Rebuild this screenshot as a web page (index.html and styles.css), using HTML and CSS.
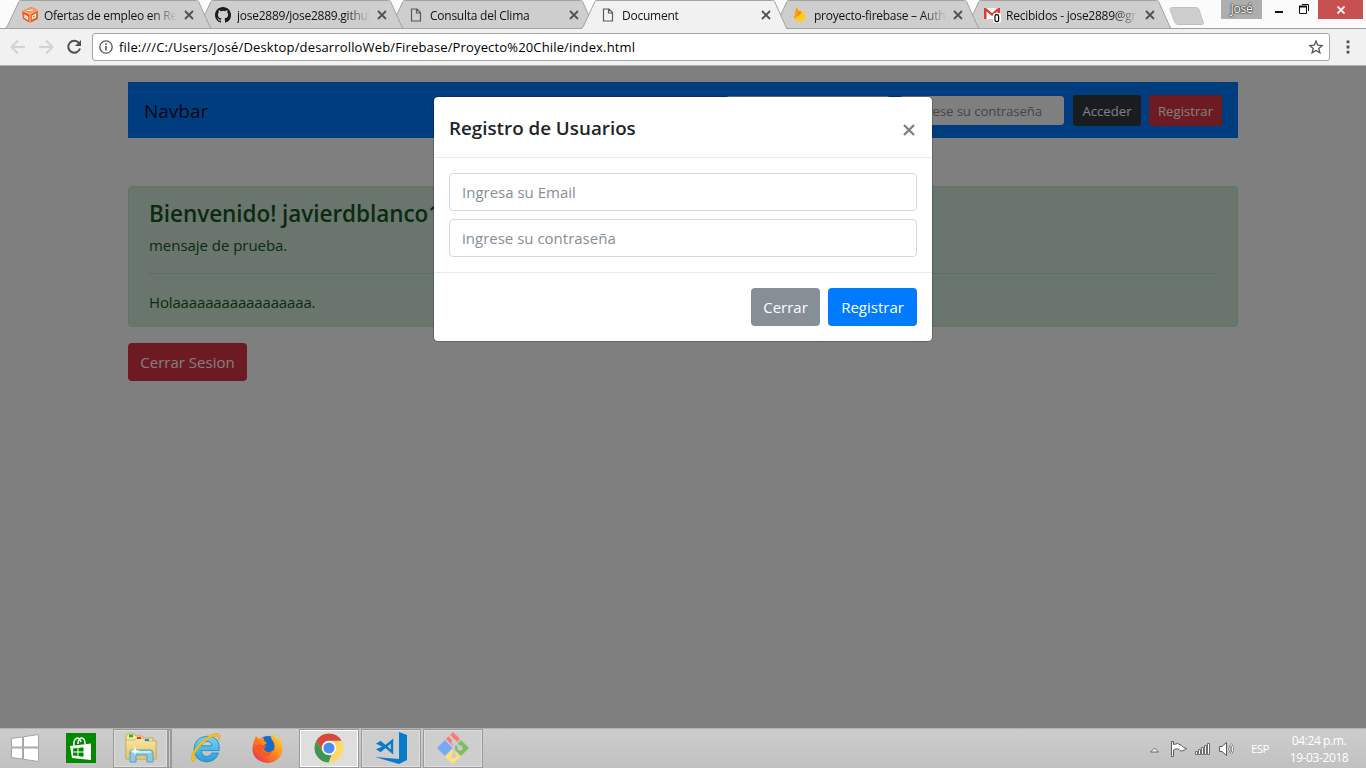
FILE: index.html
```html
<!DOCTYPE html>
<html lang="es">
<head>
<meta charset="utf-8">
<title>Document</title>
<link rel="stylesheet" href="styles.css">
</head>
<body>
<svg class="defs" width="0" height="0">
  <defs>
    <symbol id="tab" viewBox="0 0 206 29"><path d="M0 28.5L2 27L14 1.5Q14.6.5 16 .5H191.500Q193 .5 193.600 1.500L205 27L206 28.500Z"/></symbol>
    <symbol id="x" viewBox="0 0 10 10"><path d="M1 1L9 9M9 1L1 9" fill="none" stroke="#505050" stroke-width="1.8"/></symbol>
    <symbol id="file" viewBox="0 0 12 14"><path d="M1.500 1H7L10.500 4.500V13H1.500ZM6.500 1V5H10.500" fill="none" stroke="#5a5a5a" stroke-width="1.200"/></symbol>
    <linearGradient id="bar" x2="0" y2="1"><stop stop-color="#f6e7a5"/><stop offset="1" stop-color="#e5c563"/></linearGradient>
    <linearGradient id="ie" x2="0" y2="1"><stop stop-color="#79d3f5"/><stop offset="1" stop-color="#249ed9"/></linearGradient>
    <linearGradient id="fox" x1="1" x2="0" y2="1"><stop stop-color="#ffe43b"/><stop offset=".45" stop-color="#ff8a18"/><stop offset="1" stop-color="#e72558"/></linearGradient>
  </defs>
</svg>
<div class="browser">
  <header class="tabstrip">
    <div class="tabs">
      <div class="tab t1"><svg class="shape"><use href="#tab"/></svg>
        <svg class="fav" viewBox="0 0 16 16"><path d="M0 4L9 0L16 3V12L8 16L1 12Z" fill="#e8641f"/><path d="M0 4L9 0L16 3L8 7Z" fill="#f5975c"/><path d="M8 7V16M1 4L8 7L16 3" fill="none" stroke="#fbd0b4" stroke-width=".8"/><path d="M5 3.500L11 3M10.500 9L13.500 7.500V10L10.500 11.500ZM3 8.500L5.500 10V12L3 10.500Z" fill="none" stroke="#fff" stroke-width="1.200"/></svg>
        <span class="label">Ofertas de empleo en Re</span><svg class="close"><use href="#x"/></svg></div>
      <div class="tab t2"><svg class="shape"><use href="#tab"/></svg>
        <svg class="fav" viewBox="0 0 16 16"><path fill="#1b1b1b" d="M8 0C3.580 0 0 3.580 0 8c0 3.540 2.290 6.530 5.470 7.590.4.070.55-.17.55-.38V13.720c-2.230.48-2.700-.95-2.700-.95-.36-.92-.89-1.170-.89-1.170-.73-.5.05-.49.05-.49.8.06 1.230.83 1.230.83.72 1.220 1.880.87 2.340.67.07-.52.28-.87.5-1.070-1.780-.2-3.640-.89-3.640-3.950 0-.87.31-1.590.82-2.150-.08-.2-.36-1.020.08-2.120 0 0 .67-.22 2.200.82a7.600 7.600 0 0 1 4 0c1.530-1.040 2.200-.82 2.200-.82.44 1.100.16 1.920.08 2.120.51.56.82 1.280.82 2.150 0 3.070-1.870 3.750-3.650 3.950.29.25.54.73.54 1.480v2.190c0 .21.15.46.55.38A8 8 0 0 0 16 8c0-4.420-3.580-8-8-8"/></svg>
        <span class="label">jose2889/jose2889.github</span><svg class="close"><use href="#x"/></svg></div>
      <div class="tab t3"><svg class="shape"><use href="#tab"/></svg>
        <svg class="fav doc"><use href="#file"/></svg>
        <span class="label">Consulta del Clima</span><svg class="close"><use href="#x"/></svg></div>
      <div class="tab t4 active"><svg class="shape"><use href="#tab"/></svg>
        <svg class="fav doc"><use href="#file"/></svg>
        <span class="label">Document</span><svg class="close"><use href="#x"/></svg></div>
      <div class="tab t5"><svg class="shape"><use href="#tab"/></svg>
        <svg class="fav" viewBox="0 0 16 16"><path d="M2 12L4 1Q4.500 0 5 1L7 4.500L8 3L9.500 5L12 3.500L14 12L8 16Z" fill="#ffcb2b"/><path d="M2 12L4 1Q4.500 0 5 1L7 4.500Z" fill="#ffa000"/><path d="M2 12L8 3L9.700 6Z" fill="#f58a15"/></svg>
        <span class="label">proyecto-firebase – Auth</span><svg class="close"><use href="#x"/></svg></div>
      <div class="tab t6"><svg class="shape"><use href="#tab"/></svg>
        <svg class="fav mail" viewBox="0 0 17 16"><path d="M0 1H16V12H0Z" fill="#fff"/><path d="M0 12V1H2L8 6L14 1H16V12H13.500V4.500L8 9L2.500 4.500V12Z" fill="#db3d36"/><rect x="9" y="6" width="8" height="10" rx="2" fill="#fff"/><rect x="11" y="7.700" width="3.600" height="7" rx="1.700" fill="none" stroke="#000" stroke-width="1.200"/></svg>
        <span class="label">Recibidos - jose2889@gr</span><svg class="close"><use href="#x"/></svg></div>
    </div>
    <svg class="newtab" width="36" height="19" viewBox="0 0 36 19"><path d="M3 .5H27Q29 .5 30 2.500L34.500 16Q34.500 17.500 33 17.500H9Q7 17.500 6 15.500L1 2.500Q1 .5 3 .5Z" fill="#cecece" stroke="#c0c0c0"/></svg>
    <div class="window">
      <span class="profile">José</span>
      <svg class="mini" width="56" height="20" viewBox="0 0 56 20"><path d="M13 12H21" stroke="#111" stroke-width="2"/><path d="M37.500 6.500H44.500V13.500H37.500ZM40 4.500H46.500V11" fill="none" stroke="#111"/><path d="M37 6.500H45" stroke="#111" stroke-width="2"/></svg>
      <span class="quit"><svg width="8" height="8" viewBox="0 0 8 8"><path d="M.5.5L7.500 7.500M7.500.5L.5 7.500" stroke="#fff" stroke-width="1.800"/></svg></span>
    </div>
  </header>
  <div class="toolbar">
    <svg class="nav" width="90" height="36" viewBox="0 0 90 36"><path d="M25 18H12M18 11.500L11.500 18L18 24.500M39 18H52M46 11.500L52.500 18L46 24.500" fill="none" stroke="#d2d2d2" stroke-width="1.900"/><path d="M79 14A6 6 0 1 0 80 19.500" fill="none" stroke="#505050" stroke-width="2"/><path d="M81 11V17H75Z" fill="#505050"/></svg>
    <div class="omnibox">
      <svg width="14" height="14" viewBox="0 0 14 14"><circle cx="7" cy="7" r="6.200" fill="none" stroke="#555" stroke-width="1.300"/><path d="M7 6V10.500M7 3.300V4.900" stroke="#555" stroke-width="1.600"/></svg>
      <span class="url">file:///C:/Users/José/Desktop/desarrolloWeb/Firebase/Proyecto%20Chile/index.html</span>
      <svg width="14" height="14" viewBox="0 0 14 14"><path d="M7 1L8.700 5.200L13.200 5.500L9.800 8.400L10.900 12.800L7 10.400L3.100 12.800L4.200 8.400L.8 5.500L5.300 5.200Z" fill="none" stroke="#555" stroke-width="1.300"/></svg>
    </div>
    <svg class="dots" width="4" height="14" viewBox="0 0 4 14"><path d="M.6.500h2.800v2.800H.6ZM.6 5.600h2.800v2.800H.6ZM.6 10.700h2.800v2.800H.6Z" fill="#505050"/></svg>
  </div>
  <main class="viewport">
    <div class="container">
      <nav class="navbar">
        <a class="brand">Navbar</a>
        <div class="login">
          <span class="input sm"></span>
          <span class="input sm">ingrese su contraseña</span>
          <button class="btn small dark">Acceder</button>
          <button class="btn small danger">Registrar</button>
        </div>
      </nav>
      <section class="alert">
        <h4>Bienvenido! javierdblanco1</h4>
        <p>mensaje de prueba.</p>
        <hr>
        <p class="hola">Holaaaaaaaaaaaaaaaaa.</p>
      </section>
      <button class="btn danger logout">Cerrar Sesion</button>
    </div>
    <div class="backdrop">
      <div class="modal">
        <div class="modal-header"><h5>Registro de Usuarios</h5><svg width="12" height="12" viewBox="0 0 12 12"><path d="M1 1L11 11M11 1L1 11" stroke="#7f7f7f" stroke-width="2.300"/></svg></div>
        <div class="modal-body"><span class="input">Ingresa su Email</span><span class="input pass">ingrese su contraseña</span></div>
        <div class="modal-footer"><button class="btn secondary">Cerrar</button><button class="btn primary">Registrar</button></div>
      </div>
    </div>
  </main>
  <footer class="taskbar">
    <div class="apps">
      <span class="app start"><svg width="28" height="28" viewBox="0 0 28 28"><path d="M.5 4.500L11.500 3V13H.5ZM12.500 2.800L27.500.5V13H12.500ZM.5 14H11.500V25L.5 23.500ZM12.500 14H27.500V27.500L12.500 25.200Z" fill="#fff" stroke="#a6a6a6"/></svg></span>
      <span class="app store"><svg width="30" height="30" viewBox="0 0 30 30"><path fill="#008a00" d="M0 0H30V30H0Z"/><path d="M4 13L25 10.500V27L6 25Z" fill="#fff"/><path d="M8 13C7 5 13 2 15 9M12 11C12 3 19 3 19 11" fill="none" stroke="#fff" stroke-width="1.500"/><path d="M7 15.500L11.500 15V18.500H7ZM12.500 15L17.500 14.300V18.500H12.500ZM7 19.500H11.500V23L7 22.600ZM12.500 19.500H17.500V23.700L12.500 23.200Z" fill="#008a00"/></svg></span>
      <span class="app framed explorer"><svg width="32" height="30" viewBox="0 0 32 30"><path d="M1 3Q1 1 3 1H9L11 3H17L19 5H28V8H31V26H1Z" fill="#f5e6a7" stroke="#c9a94f"/><path d="M1 7H10L12 5H18L20 8H31V26H1Z" fill="url(#bar)" stroke="#cdae5c" stroke-width=".8"/><path d="M4 3H8" stroke="#13b823" stroke-width="2.500"/><path d="M12 5H16" stroke="#d83a2b" stroke-width="2"/><path d="M20 7H24" stroke="#238ddd" stroke-width="2"/><path d="M5 29V18Q5 17 7 17H25Q28 17 28 20V29H22V22H11V29Z" fill="#8dc9ea" stroke="#579dc4"/><path d="M7 19H26" stroke="#c7eefb" stroke-width="2"/><path d="M10 13L11 17L15 18L11 19L10 23L9 19L5 18L9 17Z" fill="#fff"/></svg></span>
      <span class="app edge"><svg width="32" height="32" viewBox="0 0 32 32"><path d="M28.500 21H21.800Q20.500 24.400 16.600 24.400Q11.800 24.200 11.300 18.600H29.200Q30.700 4.500 17.300 4.200Q4.300 5 4 17.500Q5 29 16.500 30Q25.800 29.500 28.500 21ZM11.500 13.800Q12.200 9.500 16.700 9.400Q21.500 9.400 22 13.800Z" fill="url(#ie)" stroke="#1587c4" stroke-width=".8"/><path d="M7 25.500Q2 32 1.500 27Q1.500 20 10 11Q20 1.500 27 1.500Q31.500 2 29 8.500Q30 3 24 4.500Q17 6.500 9.500 15Q3.500 22 4 26Q4.500 28 7 25.500Z" fill="#f8c514" stroke="#d49a0c" stroke-width=".5"/></svg></span>
      <span class="app firefox"><svg width="31" height="31" viewBox="0 0 31 31"><circle cx="16" cy="14" r="11" fill="#1769ce"/><path d="M4 3L7 6Q9 4 12 5Q11 8 15 10L11 13Q12 20 18 19Q24 18 22 10L19 5L20 1Q24 4 25 7L27 4Q34 17 27 25Q19 33 8 28Q-3 22 2 8Z" fill="url(#fox)"/><path d="M4 13L8 11L11 13L14 12L13 15L10 17Q14 22 20 18L17 23Q7 24 4 13Z" fill="#f45a22"/></svg></span>
      <span class="app framed current"><svg width="30" height="30" viewBox="0 0 30 30"><circle cx="15" cy="15" r="14.500" fill="#ffd96b"/><path d="M2.400 7.800A14.500 14.500 0 0 1 27.600 7.800H15A7.200 7.200 0 0 0 8.700 18.600Z" fill="#d34a3e"/><path d="M2.400 7.800L8.700 18.600Q11.500 23 17.500 22L14.500 29.500A14.500 14.500 0 0 1 2.400 7.800Z" fill="#3d9556"/><circle cx="15" cy="15" r="7" fill="#fff"/><circle cx="15" cy="15" r="5.600" fill="#4c8bf5"/></svg></span>
      <span class="app framed"><svg width="32" height="32" viewBox="0 0 32 32"><path d="M24 0L32 3V28L24 32L0 25L24 27Z" fill="#087bc9"/><path d="M3.500 11.500L5.500 10.300L17 20V9L5.500 18.700L3.500 17.500L10 14.500Z" fill="none" stroke="#087bc9" stroke-width="2.400"/></svg></span>
      <span class="app framed"><svg width="32" height="32" viewBox="0 0 32 32"><path d="M16 0L23 7L16 14L9 7Z" fill="#f87b79"/><path d="M8 8L15.500 16L8 24L0 16Z" fill="#78a9f5"/><path d="M24 8L32 16L24 24L16 16Z" fill="#79c15b"/><path d="M16 17L23.500 24.500L16 32L8 24.500Z" fill="#ffe178"/><path d="M12 3L17 9V24M17 9L23 16" fill="none" stroke="#ccc" stroke-width="2.200"/><circle cx="17" cy="10" r="2.600" fill="#ccc"/><circle cx="17" cy="23.500" r="2.600" fill="#ccc"/><circle cx="23" cy="16" r="2.600" fill="#ccc"/></svg></span>
    </div>
    <div class="tray">
      <svg width="86" height="20" viewBox="0 0 86 20"><path d="M.5 13L4.500 9L8.500 13Z" fill="#fff" stroke="#666"/><path d="M21.500 2.500V17.500H23.500V11Q28 8.500 30 11.500Q32 13 36.500 9.500Q33 9 31.500 6.500Q28 3 23.500 5.500V2.500Z" fill="#fff" stroke="#5c5c5c"/><path d="M45.500 12.500H47.500V15.500H45.500ZM48.500 10.500H50.500V15.500H48.500ZM51.500 8.500H53.500V15.500H51.500ZM54.500 6.500H56.500V15.500H54.500ZM57.500 4.500H59.500V15.500H57.500Z" fill="#fff" stroke="#606060" stroke-width=".9"/><path d="M69.500 7.500H72L76.500 3.500V16.500L72 12.500H69.500Z" fill="#fff" stroke="#5c5c5c"/><path d="M78.500 7Q80.500 10 78.500 13M81 5Q84.500 10 81 15" fill="none" stroke="#5c5c5c" stroke-width="2"/><path d="M78.500 7Q80.500 10 78.500 13M81 5Q84.500 10 81 15" fill="none" stroke="#fff"/></svg>
      <span class="lang">ESP</span>
      <span class="clock">04:24 p.m.<br>19-03-2018</span>
    </div>
  </footer>
</div>
</body>
</html>
```
FILE: styles.css
```css
* { box-sizing: border-box; }
body { margin: 0; font-family: "Open Sans", "Noto Sans", sans-serif; font-size: 15px; color: #212529; overflow: hidden; }
h4, h5, p { margin: 0; }
svg { flex: none; }
.defs { position: absolute; }
.browser { width: 1366px; height: 768px; display: flex; flex-direction: column; }

.tabstrip { height: 29px; background: #fbfbfb; display: flex; border-bottom: 1px solid #a0a0a0; flex: none; }
.tabs { display: flex; padding-left: 5px; height: 29px; }
.tab { position: relative; width: 206px; height: 29px; margin-right: -14px; padding: 1px 16px 0 17px; display: flex; align-items: center; flex: none; font-size: 12px; color: #111; }
.t1 { z-index: 6; padding-right: 17px; }
.t2 { z-index: 5; }
.t3 { z-index: 4; }
.t4 { z-index: 7; }
.t5 { z-index: 3; }
.t6 { z-index: 2; }
.shape { position: absolute; left: 0; top: 0; width: 206px; height: 29px; z-index: -1; fill: #cecece; stroke: #a3a3a3; }
.active .shape { fill: #f1f1f1; }
.active::after { content: ""; position: absolute; left: 1px; right: 1px; bottom: 0; height: 1px; background: #f1f1f1; }
.fav { width: 16px; height: 16px; margin-right: 6px; }
.t2 .fav { margin: 0 6px 0 1px; }
.t5 .fav { margin: 0 6px 0 2px; }
.tab .doc { width: 12px; height: 14px; margin: 0 8px 0 4px; }
.tab .mail { width: 17px; margin: 0 5px 0 2px; }
.label { flex: 1; min-width: 0; white-space: nowrap; letter-spacing: -.25px; -webkit-mask-image: linear-gradient(90deg, #000 108px, transparent 133px); mask-image: linear-gradient(90deg, #000 108px, transparent 133px); }
.close { width: 10px; height: 10px; margin-left: 4px; }
.newtab { margin: 7px 0 0 12px; }
.window { margin-left: auto; display: flex; padding-right: 3px; }
.profile { width: 41px; height: 19px; background: #aeaeae; color: #fff; font-size: 12px; line-height: 18px; text-align: center; text-shadow: 0 0 2px #222, 0 0 1px #333, 0 0 1px #333; letter-spacing: -.2px; }
.quit { width: 45px; height: 19px; background: #c75050; display: flex; align-items: center; justify-content: center; }

.toolbar { height: 37px; background: #f1f1f1; display: flex; align-items: center; border-bottom: 1px solid #b0b0b0; flex: none; }
.nav { margin-right: 2px; }
.omnibox { width: 1238px; height: 28px; display: flex; align-items: center; gap: 6px; padding: 0 6px; border: 1px solid #a5a5a5; border-radius: 3px; background: #fff; }
.url { flex: 1; font-size: 13px; letter-spacing: .15px; color: #000; white-space: nowrap; }
.dots { margin-left: 16px; }

.viewport { position: relative; flex: 1; background: #fff; display: flex; flex-direction: column; align-items: center; }
.container { width: 1110px; padding-top: 16px; }
.navbar { height: 56px; background: #007bff; display: flex; align-items: center; justify-content: space-between; padding: 0 16px; }
.brand { font-size: 19px; color: rgba(0,0,0,.9); padding-top: 1px; }
.login { display: flex; align-items: center; gap: 8px; }
.input { display: flex; align-items: center; height: 38px; border: 1px solid #d5d8db; border-radius: 4px; background: #fff; color: #868e96; padding: 0 12px; white-space: nowrap; }
.sm { width: 164px; height: 29px; font-size: 13.200px; letter-spacing: -.1px; padding: 1px 8px 0; border-color: #fff; border-radius: 3px; }
.sm + .sm { margin-left: 2px; margin-right: 1px; }
.btn { border: 0; border-radius: 4px; height: 38px; padding: 0; color: #fff; font-family: inherit; font-size: 15px; text-align: center; white-space: nowrap; }
.small { height: 31px; font-size: 13.200px; border-radius: 3px; padding-top: 1px; }
.dark { width: 68px; background: #343a40; }
.danger { width: 73px; background: #dc3545; }
.logout { width: 119px; margin-top: 16px; display: block; }
.alert { height: 141px; margin-top: 48px; padding: 12px 20px; background: #d4edda; border: 1px solid #c3e6cb; border-radius: 4px; color: #155724; }
.alert h4 { font-size: 22.500px; line-height: 29px; margin-bottom: 5px; font-weight: 600; width: 320px; letter-spacing: -.05px; }
.alert p { line-height: 24px; letter-spacing: -.04px; }
.alert .hola { letter-spacing: -.15px; }
.alert hr { margin: 16px 0; border: 0; border-top: 1px solid #b1dfbb; }

.backdrop { position: absolute; inset: 0; background: rgba(0,0,0,.5); display: flex; justify-content: center; align-items: flex-start; padding-top: 30px; }
.modal { width: 500px; height: 246px; background: #fff; background-clip: padding-box; border: 1px solid rgba(0,0,0,.2); border-radius: 5px; }
.modal-header { height: 61px; display: flex; align-items: center; justify-content: space-between; padding: 0 17px 0 15px; border-bottom: 1px solid #e9ecef; }
.modal-header h5 { font-size: 18.800px; font-weight: 600; padding-top: 2px; }
.modal-header svg { margin-top: 5px; }
.modal-body { padding: 15px; height: 114px; display: flex; flex-direction: column; gap: 8px; }
.modal-footer { display: flex; justify-content: flex-end; gap: 8px; padding: 15px; border-top: 1px solid #e9ecef; }
.secondary { width: 69px; background: #868e96; }
.primary { width: 89px; background: #007bff; }

.taskbar { height: 40px; flex: none; background: linear-gradient(#cdcdcd, #c1c1c1); border-top: 1px solid #b2b2b2; display: flex; justify-content: space-between; }
.apps { display: flex; padding-left: 11px; }
.app { width: 60px; height: 39px; display: flex; align-items: center; justify-content: center; margin-right: 2px; }
.app svg { margin-top: -1px; }
.start { width: 28px; margin-right: 27px; }
.store { width: 30px; margin-right: 17px; }
.framed { background: #cecece; border: 1px solid #999; box-shadow: inset 0 0 0 1px #dedede; }
.explorer { width: 59px; border-right: 5px double #999; margin-right: 4px; }
.edge { width: 60px; margin-right: 1px; }
.firefox { width: 60px; margin-right: 2px; }
.tray { display: flex; align-items: center; color: #fff; font-size: 12px; letter-spacing: -.4px; }
.current { background: #dedede; box-shadow: inset 0 0 0 1px #fff; }
.lang { width: 19px; margin-left: 15px; font-size: 11.500px; letter-spacing: -.6px; }
.clock { width: 60px; margin: 0 17px 0 19px; text-align: center; line-height: 17px; white-space: nowrap; }
```
